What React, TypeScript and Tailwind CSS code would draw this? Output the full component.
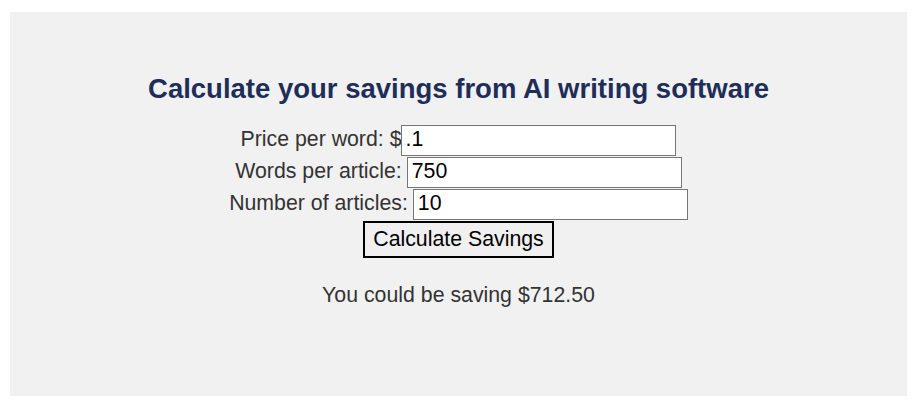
const App = () => {
  return (
    <div className="w-[917px] h-[406px] bg-white pt-[12px] pl-[10px] font-['Liberation_Sans',Arial,sans-serif]">
      <div className="w-[897px] h-[384px] bg-[#f1f1f1] flex flex-col items-center pt-[61px]">
        <h2 className="text-[27.5px] font-bold text-[#1f2d58] leading-[32px]">
          Calculate your savings from AI writing software
        </h2>
        <div className="mt-[19px] flex flex-col items-center text-[21.3px] text-[#333]">
          <div className="flex items-center h-[32px]">
            <span>Price per word: $</span>
            <input
              defaultValue=".1"
              className="w-[275px] h-[31px] bg-white border border-[#767676] px-[3px] text-black outline-none"
            />
          </div>
          <div className="flex items-center h-[32px]">
            <span className="mr-[5px]">Words per article:</span>
            <input
              defaultValue="750"
              className="w-[275px] h-[31px] bg-white border border-[#767676] px-[4px] text-black outline-none"
            />
          </div>
          <div className="flex items-center h-[32px]">
            <span className="mr-[5px]">Number of articles:</span>
            <input
              defaultValue="10"
              className="w-[275px] h-[31px] bg-white border border-[#767676] px-[4px] text-black outline-none"
            />
          </div>
          <button className="mt-[1px] h-[37px] px-[8px] border-2 border-black text-black bg-[#f0f0f0]">
            Calculate Savings
          </button>
          <p className="mt-[25px] leading-[24px]">You could be saving $712.50</p>
        </div>
      </div>
    </div>
  );
};

export default App;
